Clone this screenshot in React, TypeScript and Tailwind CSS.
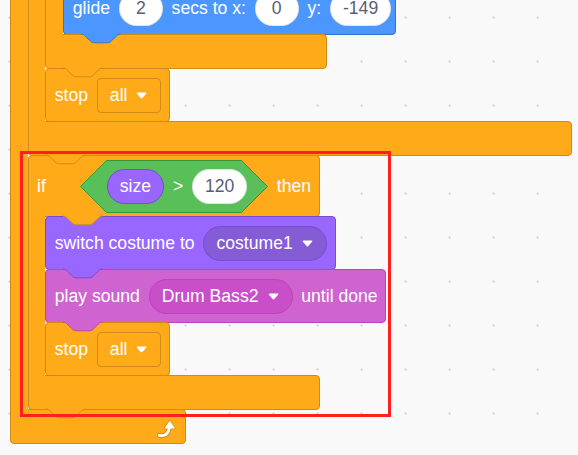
import clsx from "clsx";
import type { ReactNode } from "react";

type Tone = { bg: string; border: string; fill: string; stroke: string };

const control: Tone = { bg: "bg-[#ffab19]", border: "border-[#cf8b17]", fill: "#ffab19", stroke: "#cf8b17" };
const motion: Tone = { bg: "bg-[#4c97ff]", border: "border-[#3373cc]", fill: "#4c97ff", stroke: "#3373cc" };
const looks: Tone = { bg: "bg-[#9966ff]", border: "border-[#774dcb]", fill: "#9966ff", stroke: "#774dcb" };
const sound: Tone = { bg: "bg-[#cf63cf]", border: "border-[#bd42bd]", fill: "#cf63cf", stroke: "#bd42bd" };

// puzzle tab under a block, same outline as scratch-blocks' notch path
const TAB_PATH = "M0,0 c2,0 3,1 4,2 l4,4 c1,1 2,2 4,2 h12 c2,0 3,-1 4,-2 l4,-4 c1,-1 2,-2 4,-2";

function Tab({ tone, at }: { tone: Tone; at: string }) {
  return (
    <svg
      className={clsx("pointer-events-none absolute top-full z-10 overflow-visible", at)}
      width="40"
      height="10"
      aria-hidden
    >
      <g transform="scale(1.1)">
        <path d={`${TAB_PATH} Z`} fill={tone.fill} />
        <path d={TAB_PATH} fill="none" stroke={tone.stroke} strokeWidth="0.9" />
      </g>
    </svg>
  );
}

function Caret() {
  return (
    <svg className="ml-[9px] shrink-0" width="11" height="7" viewBox="0 0 11 7" aria-hidden>
      <path d="M1.5,1.2 L5.5,5.6 L9.5,1.2 Z" fill="#fff" stroke="#fff" strokeWidth="1.6" strokeLinejoin="round" />
    </svg>
  );
}

function Num({ children }: { children: ReactNode }) {
  return (
    <span className="relative flex h-[35px] min-w-[44px] shrink-0 items-center justify-center rounded-full border border-black/10 bg-white px-[12px] text-[#575e75]">
      {children}
    </span>
  );
}

function Menu({ className, children }: { className: string; children: ReactNode }) {
  return (
    <span className={clsx("flex h-[35px] shrink-0 items-center border pl-[12px] pr-[13px] text-white", className)}>
      <span>{children}</span>
      <Caret />
    </span>
  );
}

function Block({
  tone,
  cap = false,
  pad = "pr-[7.8px]",
  children,
}: {
  tone: Tone;
  cap?: boolean;
  pad?: string;
  children: ReactNode;
}) {
  return (
    <div
      className={clsx(
        "relative -mt-px flex h-[54px] w-fit shrink-0 items-center gap-[8.8px] rounded-[4px] border pl-[8.8px] text-white",
        pad,
        tone.bg,
        tone.border
      )}
    >
      {children}
      {!cap && <Tab tone={tone} at="left-[16.6px]" />}
    </div>
  );
}

function CBlock({
  tone,
  arm,
  width,
  innerTab,
  head,
  headHeight = "h-[54px]",
  foot,
  cap = false,
  children,
}: {
  tone: Tone;
  arm: string;
  width: string;
  innerTab: string;
  head?: ReactNode;
  headHeight?: string;
  foot?: ReactNode;
  cap?: boolean;
  children: ReactNode;
}) {
  return (
    <div className="relative -mt-px flex flex-col items-start">
      <div
        className={clsx(
          "relative flex items-center rounded-t-[4px] rounded-br-[4px] border pl-[8px] pr-[8px] text-white",
          headHeight,
          width,
          tone.bg,
          tone.border
        )}
      >
        {head}
        <Tab tone={tone} at={innerTab} />
      </div>
      <div className="flex">
        <div className={clsx("relative z-[1] -my-px shrink-0 border-l", arm, tone.bg, tone.border)} />
        <div className="flex flex-col items-start">{children}</div>
      </div>
      <div
        className={clsx(
          "relative -mt-px flex h-[35px] items-center justify-end rounded-b-[4px] rounded-tr-[4px] border",
          width,
          tone.bg,
          tone.border
        )}
      >
        {foot}
        {!cap && <Tab tone={tone} at="left-[16.6px]" />}
      </div>
    </div>
  );
}

function Condition() {
  return (
    <div className="relative ml-[34px] flex h-[53px] w-[188px] shrink-0 items-center pl-[27px]">
      <svg className="absolute inset-0" width="188" height="53" viewBox="0 0 188 53" aria-hidden>
        <path
          d="M0.5,26.5 L26.5,0.5 H161.5 L187.5,26.5 L161.5,52.5 H26.5 Z"
          fill="#59c059"
          stroke="#389438"
        />
      </svg>
      <span className="relative flex h-[35px] items-center rounded-full border border-[#774dcb] bg-[#9966ff] px-[12px]">
        size
      </span>
      <span className="relative mx-[8.8px]">&gt;</span>
      <Num>120</Num>
    </div>
  );
}

function RepeatArrow() {
  return (
    <svg className="mr-[7px] mt-[5px]" width="22" height="22" viewBox="0 0 24 24" aria-hidden>
      <path d="M3.5,19 C9,20 13.5,18 14.5,11" fill="none" stroke="#cf8b17" strokeWidth="5" strokeLinecap="round" />
      <path d="M15,3.5 L20,11 L10,11 Z" fill="#cf8b17" stroke="#cf8b17" strokeWidth="2.5" strokeLinejoin="round" />
      <path d="M3.5,19 C9,20 13.5,18 14.5,11" fill="none" stroke="#fff" strokeWidth="3" strokeLinecap="round" />
      <path d="M15,3.5 L20,11 L10,11 Z" fill="#fff" stroke="#fff" strokeWidth="1" strokeLinejoin="round" />
    </svg>
  );
}

function StopAll() {
  return (
    <Block tone={control} cap>
      <span>stop</span>
      <Menu className="rounded-[4px] border-[#cf8b17] bg-[#ffab19]">all</Menu>
    </Block>
  );
}

export default function App() {
  return (
    <div className="relative h-[455px] w-[578px] overflow-hidden bg-[#f9f9f9] font-['Liberation_Sans',Arial,sans-serif] text-[17.6px]">
      {/* workspace grid */}
      <svg className="absolute inset-0" width="578" height="455" aria-hidden>
        <defs>
          <pattern id="grid" width="44" height="44" patternUnits="userSpaceOnUse" x="-13" y="-5">
            <rect x="21" y="22" width="3" height="1" fill="#dadada" />
            <rect x="22" y="21" width="1" height="3" fill="#dadada" />
          </pattern>
        </defs>
        <rect width="578" height="455" fill="url(#grid)" />
      </svg>

      <div className="relative -mt-[178px] ml-[10px] w-fit">
        <CBlock tone={control} arm="w-[18px]" width="w-[176px]" innerTab="left-[34.6px]" cap foot={<RepeatArrow />}>
          <CBlock tone={control} arm="w-[17px]" width="w-[544px]" innerTab="left-[33.6px]">
            <CBlock tone={control} arm="w-[18px]" width="w-[282px]" innerTab="left-[34.6px]">
              <Block tone={motion} pad="pr-[4px]">
                <span>glide</span>
                <Num>2</Num>
                <span>secs to x:</span>
                <Num>0</Num>
                <span>y:</span>
                <Num>-149</Num>
              </Block>
            </CBlock>
            <StopAll />
          </CBlock>

          <CBlock
            tone={control}
            arm="w-[17px]"
            width="w-[292px]"
            innerTab="left-[33.6px]"
            headHeight="h-[62px]"
            head={
              <>
                <span>if</span>
                <Condition />
                <span className="ml-[9px]">then</span>
              </>
            }
          >
            <Block tone={looks}>
              <span>switch costume to</span>
              <Menu className="rounded-full border-[#774dcb] bg-[#855cd6]">costume1</Menu>
            </Block>
            <Block tone={sound}>
              <span>play sound</span>
              <Menu className="rounded-full border-[#bd42bd] bg-[#c94fc9]">Drum Bass2</Menu>
              <span>until done</span>
            </Block>
            <StopAll />
          </CBlock>
        </CBlock>
      </div>

      {/* highlight frame */}
      <div className="pointer-events-none absolute left-[20px] top-[151px] z-20 h-[266px] w-[371px] border-[3px] border-[#ff1f1f]" />
    </div>
  );
}
